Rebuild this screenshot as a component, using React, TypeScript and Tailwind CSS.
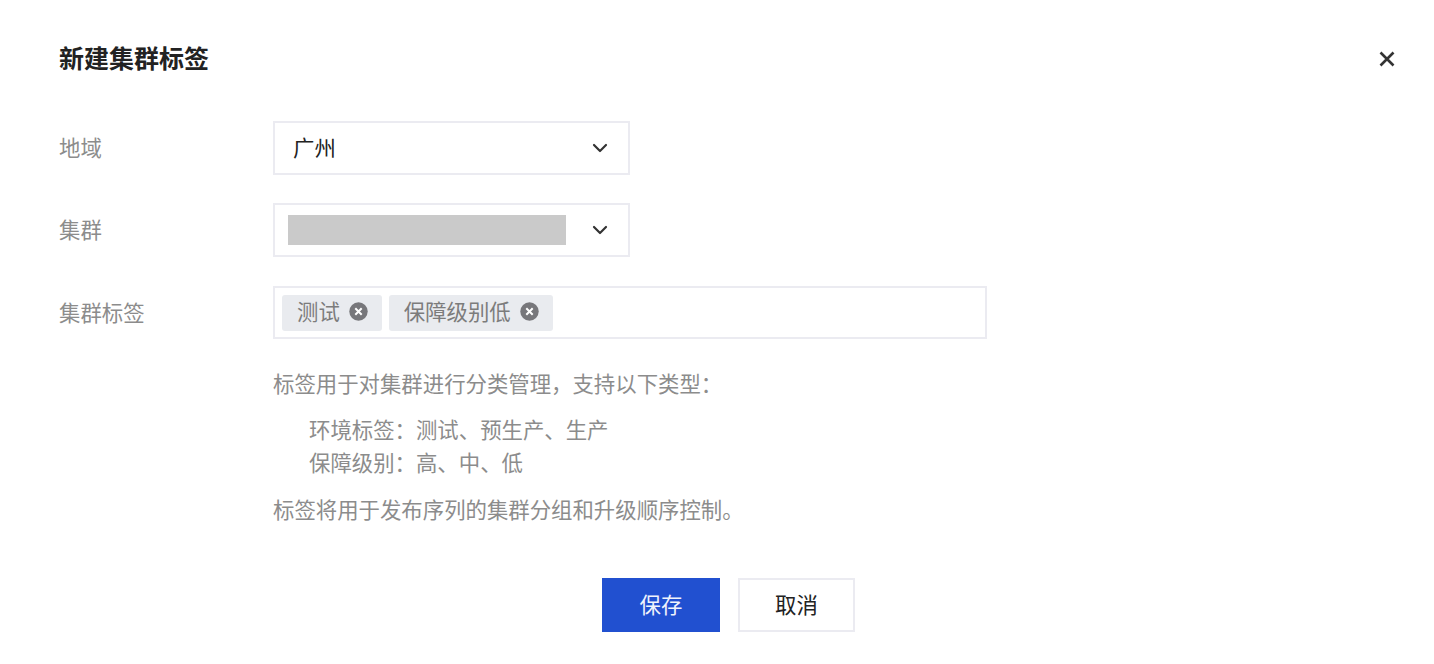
import { ChevronDown } from 'lucide-react';

const font = { fontFamily: '"Noto Sans CJK SC", "Liberation Sans", sans-serif' };

function Field({ label, children }: { label: string; children: React.ReactNode }) {
  return (
    <div className="flex items-center">
      <div className="w-[214px] pb-[2px] text-[21.4px] leading-[32px] text-[#8c8c8c]">{label}</div>
      {children}
    </div>
  );
}

function Select({ children }: { children: React.ReactNode }) {
  return (
    <div className="flex h-[54px] w-[357px] items-center justify-between border-2 border-[#ebebf1] pr-[16px]">
      {children}
      <ChevronDown className="h-[24px] w-[24px] text-[#333333]" strokeWidth={2.2} />
    </div>
  );
}

function Tag({ text }: { text: string }) {
  return (
    <span className="flex h-[36px] items-center gap-[9px] rounded-[3px] bg-[#e9ebef] pb-[2px] pl-[15px] pr-[14px] text-[21.4px] text-[#7c7c7c]">
      {text}
      <svg width="19" height="19" viewBox="0 0 19 19">
        <circle cx="9.5" cy="9.5" r="9.2" fill="#77777b" />
        <path d="M6.3 6.3l6.4 6.4M12.7 6.3l-6.4 6.4" stroke="#ffffff" strokeWidth="2" />
      </svg>
    </span>
  );
}

export default function App() {
  return (
    <div style={font} className="h-[664px] w-[1434px] overflow-hidden bg-white pl-[59px] pr-[36px] pt-[41px]">
      <div className="flex h-[36px] items-center justify-between">
        <h1 className="pb-[4px] text-[25px] font-bold leading-[36px] text-[#222222]">新建集群标签</h1>
        <svg width="22" height="22" viewBox="0 0 22 22">
          <path d="M4.5 4.5l13 13M17.5 4.5l-13 13" stroke="#333333" strokeWidth="2.6" />
        </svg>
      </div>

      <div className="mt-[44px] flex flex-col">
        <Field label="地域">
          <Select>
            <span className="pb-[1px] pl-[18px] text-[21.4px] text-[#222222]">广州</span>
          </Select>
        </Field>
        <div className="mt-[28px]">
          <Field label="集群">
            <Select>
              <div className="ml-[13px] h-[30px] w-[278px] bg-[#cacaca]" />
            </Select>
          </Field>
        </div>
        <div className="mt-[29px]">
          <Field label="集群标签">
            <div className="flex h-[53px] w-[714px] items-center gap-[7px] border-2 border-[#ebebf1] pl-[7px]">
              <Tag text="测试" />
              <Tag text="保障级别低" />
            </div>
          </Field>
        </div>
      </div>

      <div className="ml-[214px] mt-[27px] text-[21.4px] leading-[33px] text-[#8c8c8c]">
        <p>标签用于对集群进行分类管理，支持以下类型：</p>
        <div className="mt-[13px] pl-[36px]">
          <p>环境标签：测试、预生产、生产</p>
          <p>保障级别：高、中、低</p>
        </div>
        <p className="mt-[14px]">标签将用于发布序列的集群分组和升级顺序控制。</p>
      </div>

      <div className="ml-[543px] mt-[53px] flex gap-[18px]">
        <button className="h-[54px] w-[118px] bg-[#2150d0] pb-[2px] text-[21.4px] text-[#f0f3fc]">保存</button>
        <button className="h-[54px] w-[117px] border-2 border-[#ebebf1] bg-white pb-[2px] text-[21.4px] text-[#222222]">取消</button>
      </div>
    </div>
  );
}
